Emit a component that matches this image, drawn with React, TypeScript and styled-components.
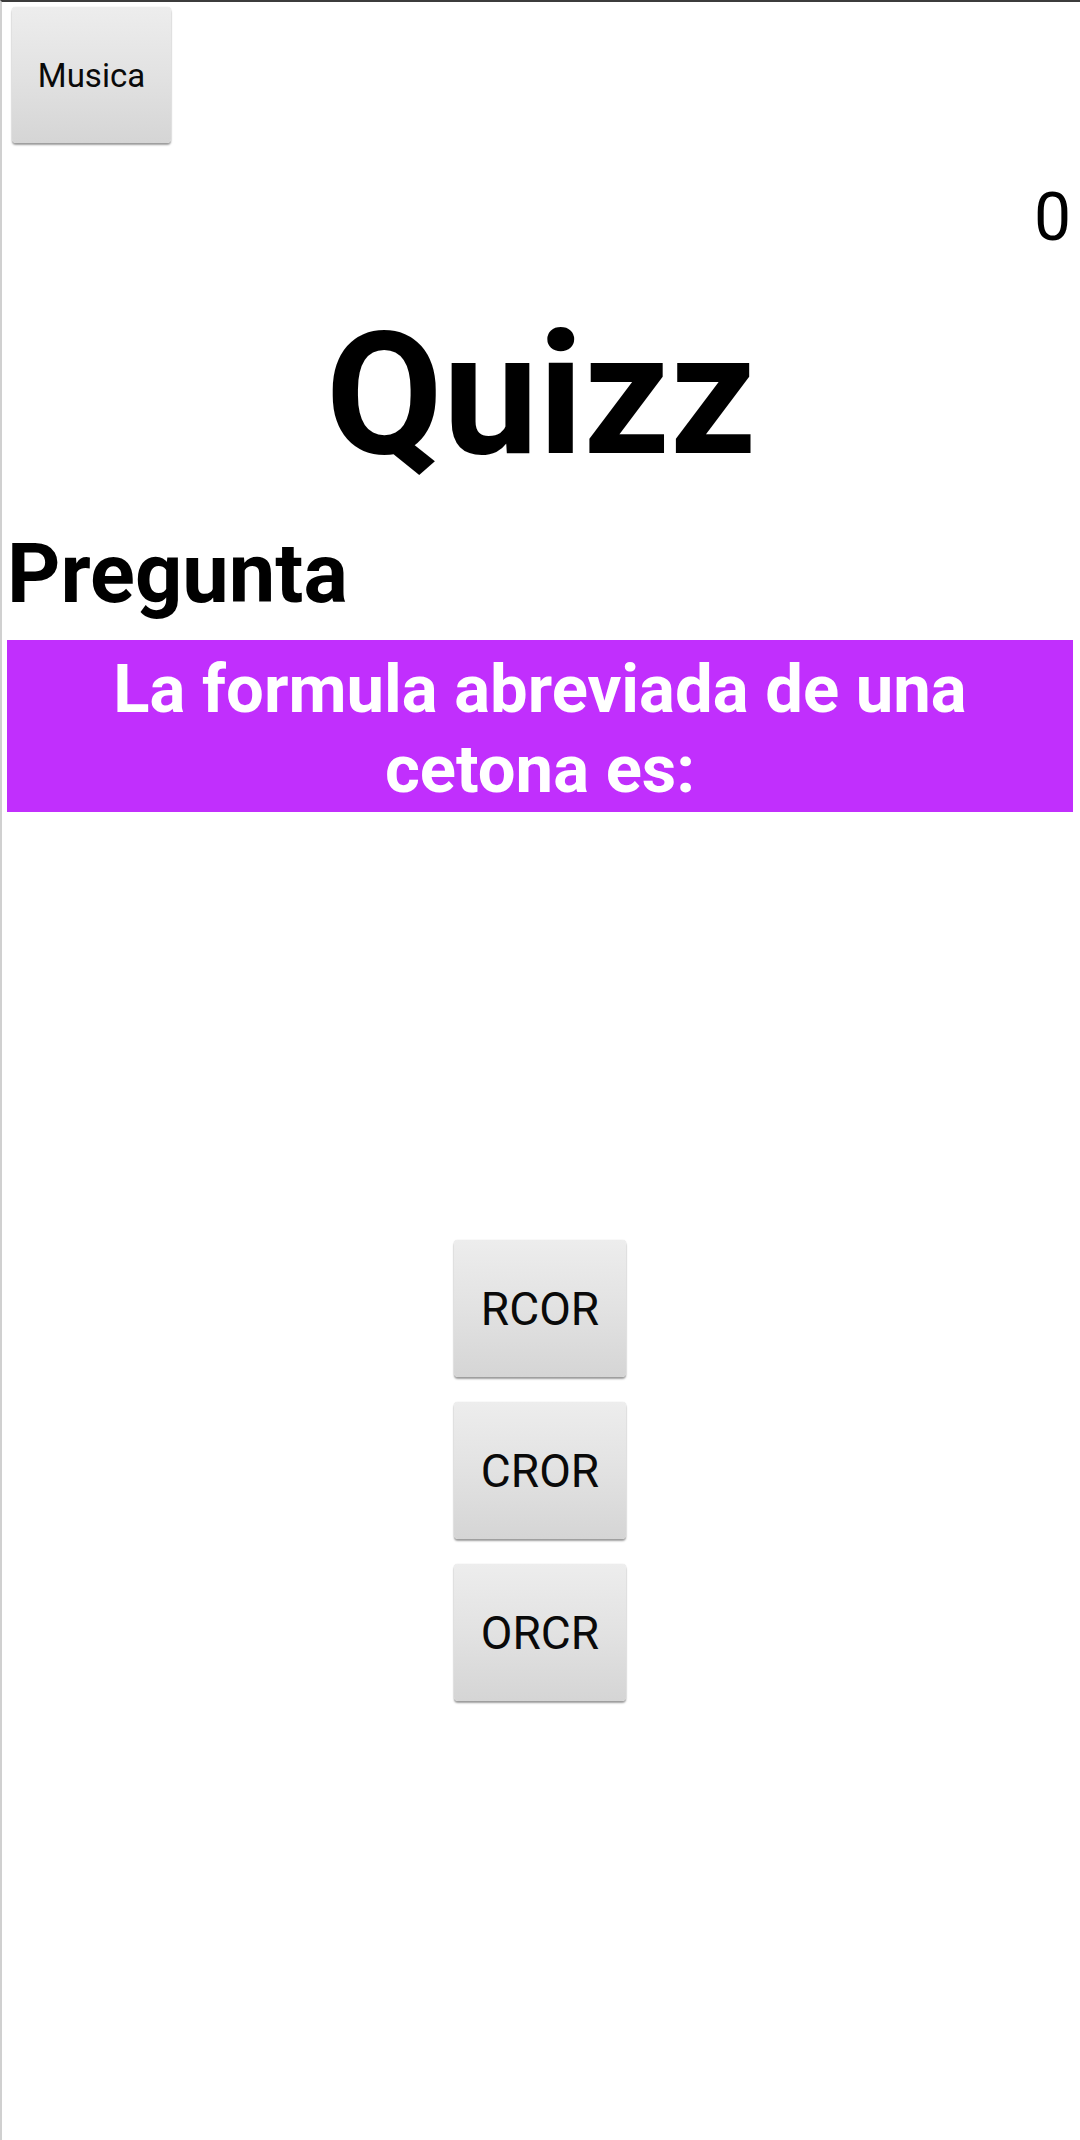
import React from "react";
import styled, { createGlobalStyle } from "styled-components";

const Global = createGlobalStyle`
  html, body { margin: 0; padding: 0; background: #ffffff; }
  body { font-family: Roboto, "Noto Sans", sans-serif; }
  * { box-sizing: border-box; }
`;

const Screen = styled.div`
  width: 1080px;
  height: 2140px;
  background: #ffffff;
  border-top: 2px solid #3c3c3c;
  border-left: 2px solid #d0d0d0;
  display: flex;
  flex-direction: column;
  overflow: hidden;
`;

const TopBar = styled.div`
  display: flex;
  padding: 5px 0 0 10px;
`;

const GreyButton = styled.button<{ $w: number; $h: number; $size: number }>`
  width: ${(p) => p.$w}px;
  height: ${(p) => p.$h}px;
  font-family: Roboto, "Noto Sans", sans-serif;
  font-size: ${(p) => p.$size}px;
  font-weight: 400;
  color: #0a0a0a;
  border: none;
  border-radius: 4px;
  padding: 0;
  background: linear-gradient(180deg, #ededed 0%, #e2e2e2 50%, #d5d5d5 100%);
  box-shadow: 0 2px 2px rgba(0, 0, 0, 0.38), 0 0 1px rgba(0, 0, 0, 0.25);
  cursor: pointer;
`;

const Score = styled.div`
  margin-top: 36px;
  padding-right: 9px;
  text-align: right;
  font-size: 66px;
  line-height: 77px;
  color: #000000;
`;

const Title = styled.h1`
  margin: 39px 0 0 0;
  text-align: center;
  font-size: 170px;
  line-height: 200px;
  font-weight: 700;
  color: #000000;
`;

const Section = styled.h2`
  margin: 30px 0 0 0;
  padding-left: 5px;
  font-size: 83px;
  line-height: 97px;
  font-weight: 700;
  color: #000000;
`;

const QuestionBox = styled.div`
  margin: 18px 7px 0 5px;
  padding: 9px 20px 3px;
  background: #c12ffd;
  color: #ffffff;
  text-align: center;
  font-size: 67px;
  line-height: 80px;
  font-weight: 700;
`;

const Options = styled.div`
  margin-top: 428px;
  display: flex;
  flex-direction: column;
  align-items: center;
  gap: 25px;
  padding-right: 2px;
`;

const options = ["RCOR", "CROR", "ORCR"];

export default function App() {
  return (
    <>
      <Global />
      <Screen>
        <TopBar>
          <GreyButton $w={159} $h={136} $size={33}>
            Musica
          </GreyButton>
        </TopBar>
        <Score>0</Score>
        <Title>Quizz</Title>
        <Section>Pregunta</Section>
        <QuestionBox>La formula abreviada de una cetona es:</QuestionBox>
        <Options>
          {options.map((o) => (
            <GreyButton key={o} $w={172} $h={137} $size={46}>
              {o}
            </GreyButton>
          ))}
        </Options>
      </Screen>
    </>
  );
}
